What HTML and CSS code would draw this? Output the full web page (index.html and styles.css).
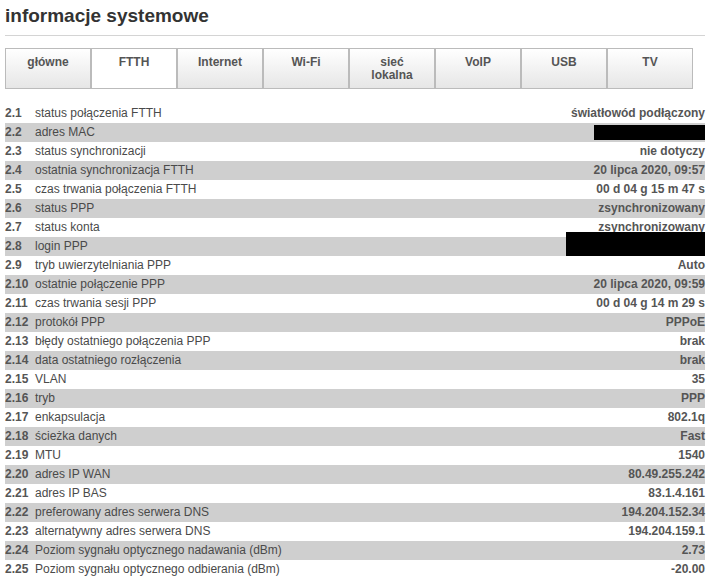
FILE: index.html
```html
<!DOCTYPE html>
<html lang="pl">
<head>
    <meta charset="UTF-8">
    <meta name="viewport" content="width=device-width, initial-scale=1.0">
    <title>informacje systemowe</title>
    <link rel="stylesheet" href="styles.css">
</head>
<body>
    <div class="page">
        <h1>informacje systemowe</h1>
        <div class="tabs">
            <div class="tab">główne</div>
            <div class="tab active">FTTH</div>
            <div class="tab">Internet</div>
            <div class="tab">Wi-Fi</div>
            <div class="tab">sieć<br>lokalna</div>
            <div class="tab">VoIP</div>
            <div class="tab">USB</div>
            <div class="tab">TV</div>
        </div>
        <table class="info">
            <tr><td class="num">2.1</td><td class="label">status połączenia FTTH</td><td class="value">światłowód podłączony</td></tr>
            <tr><td class="num">2.2</td><td class="label">adres MAC</td><td class="value"><span class="hidden mac"></span></td></tr>
            <tr><td class="num">2.3</td><td class="label">status synchronizacji</td><td class="value">nie dotyczy</td></tr>
            <tr><td class="num">2.4</td><td class="label">ostatnia synchronizacja FTTH</td><td class="value">20 lipca 2020, 09:57</td></tr>
            <tr><td class="num">2.5</td><td class="label">czas trwania połączenia FTTH</td><td class="value">00 d 04 g 15 m 47 s</td></tr>
            <tr><td class="num">2.6</td><td class="label">status PPP</td><td class="value">zsynchronizowany</td></tr>
            <tr><td class="num">2.7</td><td class="label">status konta</td><td class="value">zsynchronizowany</td></tr>
            <tr><td class="num">2.8</td><td class="label">login PPP</td><td class="value"><span class="hidden login"></span></td></tr>
            <tr><td class="num">2.9</td><td class="label">tryb uwierzytelniania PPP</td><td class="value">Auto</td></tr>
            <tr><td class="num">2.10</td><td class="label">ostatnie połączenie PPP</td><td class="value">20 lipca 2020, 09:59</td></tr>
            <tr><td class="num">2.11</td><td class="label">czas trwania sesji PPP</td><td class="value">00 d 04 g 14 m 29 s</td></tr>
            <tr><td class="num">2.12</td><td class="label">protokół PPP</td><td class="value">PPPoE</td></tr>
            <tr><td class="num">2.13</td><td class="label">błędy ostatniego połączenia PPP</td><td class="value">brak</td></tr>
            <tr><td class="num">2.14</td><td class="label">data ostatniego rozłączenia</td><td class="value">brak</td></tr>
            <tr><td class="num">2.15</td><td class="label">VLAN</td><td class="value">35</td></tr>
            <tr><td class="num">2.16</td><td class="label">tryb</td><td class="value">PPP</td></tr>
            <tr><td class="num">2.17</td><td class="label">enkapsulacja</td><td class="value">802.1q</td></tr>
            <tr><td class="num">2.18</td><td class="label">ścieżka danych</td><td class="value">Fast</td></tr>
            <tr><td class="num">2.19</td><td class="label">MTU</td><td class="value">1540</td></tr>
            <tr><td class="num">2.20</td><td class="label">adres IP WAN</td><td class="value">80.49.255.242</td></tr>
            <tr><td class="num">2.21</td><td class="label">adres IP BAS</td><td class="value">83.1.4.161</td></tr>
            <tr><td class="num">2.22</td><td class="label">preferowany adres serwera DNS</td><td class="value">194.204.152.34</td></tr>
            <tr><td class="num">2.23</td><td class="label">alternatywny adres serwera DNS</td><td class="value">194.204.159.1</td></tr>
            <tr><td class="num">2.24</td><td class="label">Poziom sygnału optycznego nadawania (dBm)</td><td class="value">2.73</td></tr>
            <tr><td class="num">2.25</td><td class="label">Poziom sygnału optycznego odbierania (dBm)</td><td class="value">-20.00</td></tr>
        </table>
    </div>
</body>
</html>
```

FILE: styles.css
```css
body {
    margin: 0;
    font-family: "Liberation Sans", Arial, sans-serif;
    color: #444;
    background: #fff;
}
.page {
    width: 700px;
    padding: 0 5px;
}
h1 {
    margin: 0;
    padding: 6px 0 9px;
    font-size: 19px;
    line-height: 20px;
    color: #333;
    border-bottom: 1px solid #d4d4d4;
}
.tabs {
    display: flex;
    margin-top: 12px;
    margin-bottom: 15px;
}
.tab {
    width: 84px;
    height: 32px;
    padding-top: 7px;
    border: 1px solid #bbb;
    background: linear-gradient(#fff, #e6e6e6);
    font-size: 12px;
    font-weight: bold;
    line-height: 13px;
    text-align: center;
    color: #555;
}
.tab.active {
    background: #fff;
}
.info {
    width: 700px;
    border-collapse: collapse;
    font-size: 12px;
}
.info td {
    height: 19px;
    padding: 0;
    line-height: 19px;
    white-space: nowrap;
}
.info tr:nth-child(even) td {
    background: #cfcfcf;
}
.num {
    width: 30px;
    font-weight: bold;
    color: #555;
}
.label {
    color: #4a4a4a;
}
.value {
    text-align: right;
    font-weight: bold;
    color: #555;
}
.hidden {
    display: inline-block;
    vertical-align: middle;
    background: #000;
}
.mac {
    width: 111px;
    height: 15px;
}
.login {
    width: 139px;
    height: 24px;
    margin-top: -5px;
}
```
